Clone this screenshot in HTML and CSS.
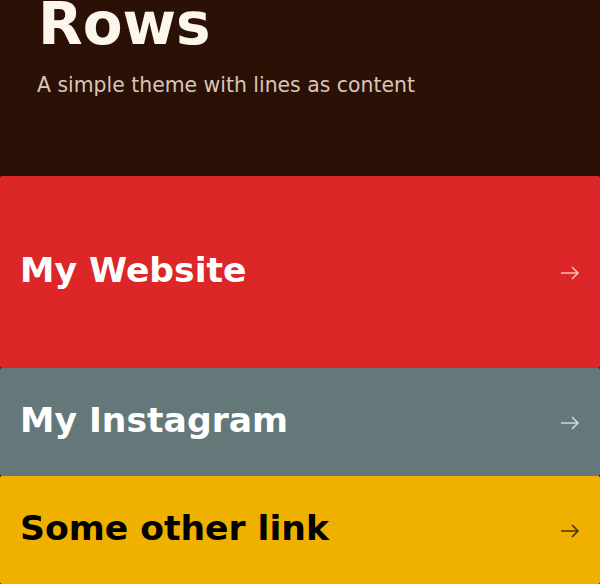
FILE: index.html
```html
<!DOCTYPE html>
<html lang="en">
<head>
    <meta charset="UTF-8">
    <meta name="viewport" content="width=device-width, initial-scale=1.0">
    <title>Rows</title>
    <link rel="stylesheet" href="styles.css">
</head>
<body>
    <div class="header">
        <h1>Rows</h1>
        <p class="tagline">A simple theme with lines as content</p>
    </div>

    <div class="rows">
        <a class="row row-red row-big" href="#">
            <span>My Website</span>
            <svg class="arrow" viewBox="0 0 20 14" width="20" height="14"><path d="M1 7h17M12 1l6 6-6 6"/></svg>
        </a>
        <a class="row row-grey" href="#">
            <span>My Instagram</span>
            <svg class="arrow" viewBox="0 0 20 14" width="20" height="14"><path d="M1 7h17M12 1l6 6-6 6"/></svg>
        </a>
        <a class="row row-yellow" href="#">
            <span>Some other link</span>
            <svg class="arrow" viewBox="0 0 20 14" width="20" height="14"><path d="M1 7h17M12 1l6 6-6 6"/></svg>
        </a>
    </div>
</body>
</html>
```

FILE: styles.css
```css
body {
    font-family: "DejaVu Sans", sans-serif;
    background-color: #2b1006;
    margin: 0;
    padding: 0;
}
.header {
    padding: 0 38px;
    height: 176px;
    overflow: hidden;
}
h1 {
    font-size: 58px;
    font-weight: bold;
    color: #fdf6ec;
    margin: -10px 0 0 0;
    line-height: normal;
}
.tagline {
    font-size: 20.4px;
    color: #d8c6b8;
    margin: 15px 0 0 -1px;
}
.rows {
    display: flex;
    flex-direction: column;
}
.row {
    display: flex;
    align-items: center;
    justify-content: space-between;
    height: 108px;
    padding: 0 20px 4px 20px;
    box-sizing: border-box;
    border-radius: 2px;
    font-size: 34.6px;
    font-weight: bold;
    text-decoration: none;
    color: #ffffff;
}
.row-big {
    height: 192px;
}
.row-red {
    background: #dc2627;
}
.row-grey {
    background: #657879;
}
.row-yellow {
    background: #f0b000;
    color: #000000;
}
.arrow {
    fill: none;
    stroke: currentColor;
    stroke-width: 1.6;
    opacity: 0.7;
    margin-top: 5px;
}
```
